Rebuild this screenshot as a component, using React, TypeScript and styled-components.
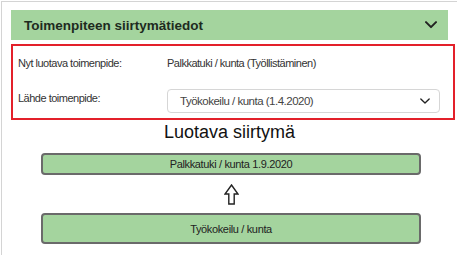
import React from 'react';
import styled, { createGlobalStyle } from 'styled-components';

const GlobalStyle = createGlobalStyle`
  body {
    margin: 1px;
    font-family: "Liberation Sans", Arial, sans-serif;
    color: #333;
    background: #fff;
  }
`;

const Card = styled.div`
  width: 454px;
  height: 252px;
  border: 1px solid #d4d4d4;
  padding: 8px 0 0 9px;
  box-sizing: content-box;
  display: flex;
  flex-direction: column;
`;

const Header = styled.div`
  width: 437px;
  height: 30px;
  background: #a4d49e;
  display: flex;
  align-items: center;
  justify-content: space-between;
  padding: 0 11px 0 13px;
  box-sizing: border-box;
  font-weight: bold;
  font-size: 13.5px;
  color: #1e2b1e;
`;

const Highlight = styled.div`
  width: 444px;
  height: 76px;
  margin-top: 4px;
  border: 2px solid #e3202a;
  box-sizing: border-box;
  display: grid;
  grid-template-columns: 149px 1fr;
  grid-template-rows: 34px 1fr;
  padding: 0 13px 0 5px;
  font-size: 11px;
  letter-spacing: -0.5px;
  line-height: 14px;
`;

const Label = styled.div<{ $top?: number }>`
  align-self: ${p => (p.$top === undefined ? 'center' : 'start')};
  padding-top: ${p => p.$top ?? 0}px;
`;

const Select = styled.div`
  align-self: start;
  height: 24px;
  margin-top: 9px;
  border: 1px solid #d6d6d6;
  border-radius: 4px;
  box-sizing: border-box;
  display: flex;
  align-items: center;
  justify-content: space-between;
  padding: 0 9px 0 12px;
  color: #444;
  font-size: 11.5px;
`;

const Title = styled.div`
  text-align: center;
  font-size: 18px;
  color: #111;
  width: 437px;
  margin-top: 1px;
  line-height: 22px;
`;

const Flow = styled.div`
  display: flex;
  flex-direction: column;
  align-items: center;
  width: 440px;
  margin-top: 10px;
`;

const Step = styled.div<{ $h: number }>`
  width: 380px;
  height: ${p => p.$h}px;
  background: #a4d49e;
  border: 2px solid #6a6a6a;
  border-radius: 4px;
  box-sizing: border-box;
  display: flex;
  align-items: center;
  justify-content: center;
  font-size: 11px;
  letter-spacing: -0.35px;
  color: #222;
`;

const ArrowWrap = styled.div`
  height: 38px;
  display: flex;
  align-items: center;
  justify-content: center;
`;

const Chevron = ({ size = 12, stroke = 2 }: { size?: number; stroke?: number }) => (
  <svg width={size} height={size * 0.6} viewBox="0 0 12 7" fill="none">
    <path d="M1 1l5 5 5-5" stroke="#222" strokeWidth={stroke} strokeLinecap="round" strokeLinejoin="round" />
  </svg>
);

const UpArrow = () => (
  <svg width="15" height="21" viewBox="0 0 15 21">
    <path d="M7.5 1 L14 10 L10.2 10 L10.2 20 L4.8 20 L4.8 10 L1 10 Z" fill="#fff" stroke="#222" strokeWidth="1.4" strokeLinejoin="miter" />
  </svg>
);

export default function App() {
  return (
    <>
      <GlobalStyle />
      <Card>
        <Header>
          <span>Toimenpiteen siirtymätiedot</span>
          <Chevron size={12} stroke={2} />
        </Header>
        <Highlight>
          <Label>Nyt luotava toimenpide:</Label>
          <Label>Palkkatuki / kunta (Työllistäminen)</Label>
          <Label $top={11}>Lähde toimenpide:</Label>
          <Select>
            <span>Työkokeilu / kunta (1.4.2020)</span>
            <Chevron size={10} stroke={1.6} />
          </Select>
        </Highlight>
        <Title>Luotava siirtymä</Title>
        <Flow>
          <Step $h={22}>Palkkatuki / kunta 1.9.2020</Step>
          <ArrowWrap>
            <UpArrow />
          </ArrowWrap>
          <Step $h={31}>Työkokeilu / kunta</Step>
        </Flow>
      </Card>
    </>
  );
}
